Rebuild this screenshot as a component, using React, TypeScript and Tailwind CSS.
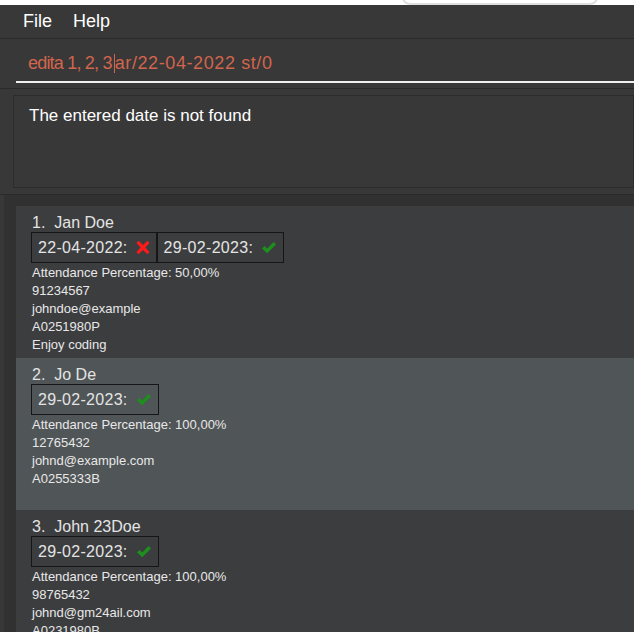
import React from 'react';

type Tag = { date: string; ok: boolean };
type Person = { idx: number; name: string; tags: Tag[]; lines: string[] };

const people: Person[] = [
  {
    idx: 1,
    name: 'Jan Doe',
    tags: [
      { date: '22-04-2022:', ok: false },
      { date: '29-02-2023:', ok: true },
    ],
    lines: ['Attendance Percentage: 50,00%', '91234567', 'johndoe@example', 'A0251980P', 'Enjoy coding'],
  },
  {
    idx: 2,
    name: 'Jo De',
    tags: [{ date: '29-02-2023:', ok: true }],
    lines: ['Attendance Percentage: 100,00%', '12765432', 'johnd@example.com', 'A0255333B'],
  },
  {
    idx: 3,
    name: 'John 23Doe',
    tags: [{ date: '29-02-2023:', ok: true }],
    lines: ['Attendance Percentage: 100,00%', '98765432', 'johnd@gm24ail.com', 'A0231980B'],
  },
];

function Check() {
  return (
    <svg width="16" height="14" viewBox="0 0 16 14">
      <path d="M1 7.5 L3.6 5 L6.2 7.6 L12.6 1 L15 3.4 L6.2 12.2 Z" fill="#1c8f1c" />
    </svg>
  );
}

function Cross() {
  return (
    <svg width="14" height="15" viewBox="0 0 13 14">
      <path
        d="M2.4 0.6 L6.5 4.6 L10.6 0.6 L12.6 2.8 L8.7 7 L12.6 11.2 L10.6 13.4 L6.5 9.4 L2.4 13.4 L0.4 11.2 L4.3 7 L0.4 2.8 Z"
        fill="#ff1a1a"
      />
    </svg>
  );
}

function Card({ p, alt }: { p: Person; alt: boolean }) {
  return (
    <div className={`h-[152px] pl-4 pt-[7px] ${alt ? 'bg-[#505557]' : 'bg-[#3c3d3f]'}`}>
      <div className="text-[16px] leading-[19px] text-[#e4e4e4]">
        {p.idx}.&nbsp; {p.name}
      </div>
      <div className="-ml-px flex">
        {p.tags.map((t, i) => (
          <div
            key={i}
            className="flex h-[31px] items-center gap-[8px] border border-[#161616] pl-[6px] pr-[6px] text-[16px] tracking-[0.3px] text-[#e4e4e4]"
          >
            <span>{t.date}</span>
            {t.ok ? <Check /> : <Cross />}
          </div>
        ))}
      </div>
      <div className="mt-[1px] text-[13px] leading-[18px] text-[#e8e8e8]">
        {p.lines.map((l, i) => (
          <div key={i}>{l}</div>
        ))}
      </div>
    </div>
  );
}

export default function App() {
  return (
    <div
      className="h-[632px] w-[634px] overflow-hidden bg-[#383838]"
      style={{ fontFamily: '"Liberation Sans", Arial, sans-serif' }}
    >
      {/* window chrome strip */}
      <div className="flex h-[5px] items-end overflow-hidden bg-white">
        <div className="ml-[402px] h-[20px] w-[196px] rounded-lg border-2 border-[#dedede]" />
      </div>

      {/* menu */}
      <div className="flex h-[34px] items-center gap-[21px] border-b border-[#2a2a2a] pl-[23px] text-[18px] text-white">
        <span>File</span>
        <span>Help</span>
      </div>

      {/* command box */}
      <div className="h-[50px] border-b border-[#2a2a2a] pl-4 pt-[13px]">
        <div className="flex h-[31px] items-start border-b-2 border-[#f0f0f0] pl-[12px] text-[18px] leading-[22px] text-[#d1654d]">
          <span className="tracking-[-0.8px]">edita 1, 2, 3</span>
          <span className="ml-[2px] mt-[2px] h-[19px] w-px bg-[#d1654d]" />
          <span className="tracking-[0.6px]">ar/22-04-2022 st/0</span>
        </div>
      </div>

      {/* result */}
      <div className="h-[106px] border-b border-[#2a2a2a] pl-[13px] pt-[6px]">
        <div className="h-[93px] border border-[#2c2c2c] pl-[15px] pt-[7px] text-[17px] text-white">
          The entered date is not found
        </div>
      </div>

      {/* list */}
      <div className="pl-1">
        <div className="bg-[#313131] pl-3 pt-[11px]">
          {people.map((p, i) => (
            <Card key={p.idx} p={p} alt={i % 2 === 1} />
          ))}
        </div>
      </div>
    </div>
  );
}
